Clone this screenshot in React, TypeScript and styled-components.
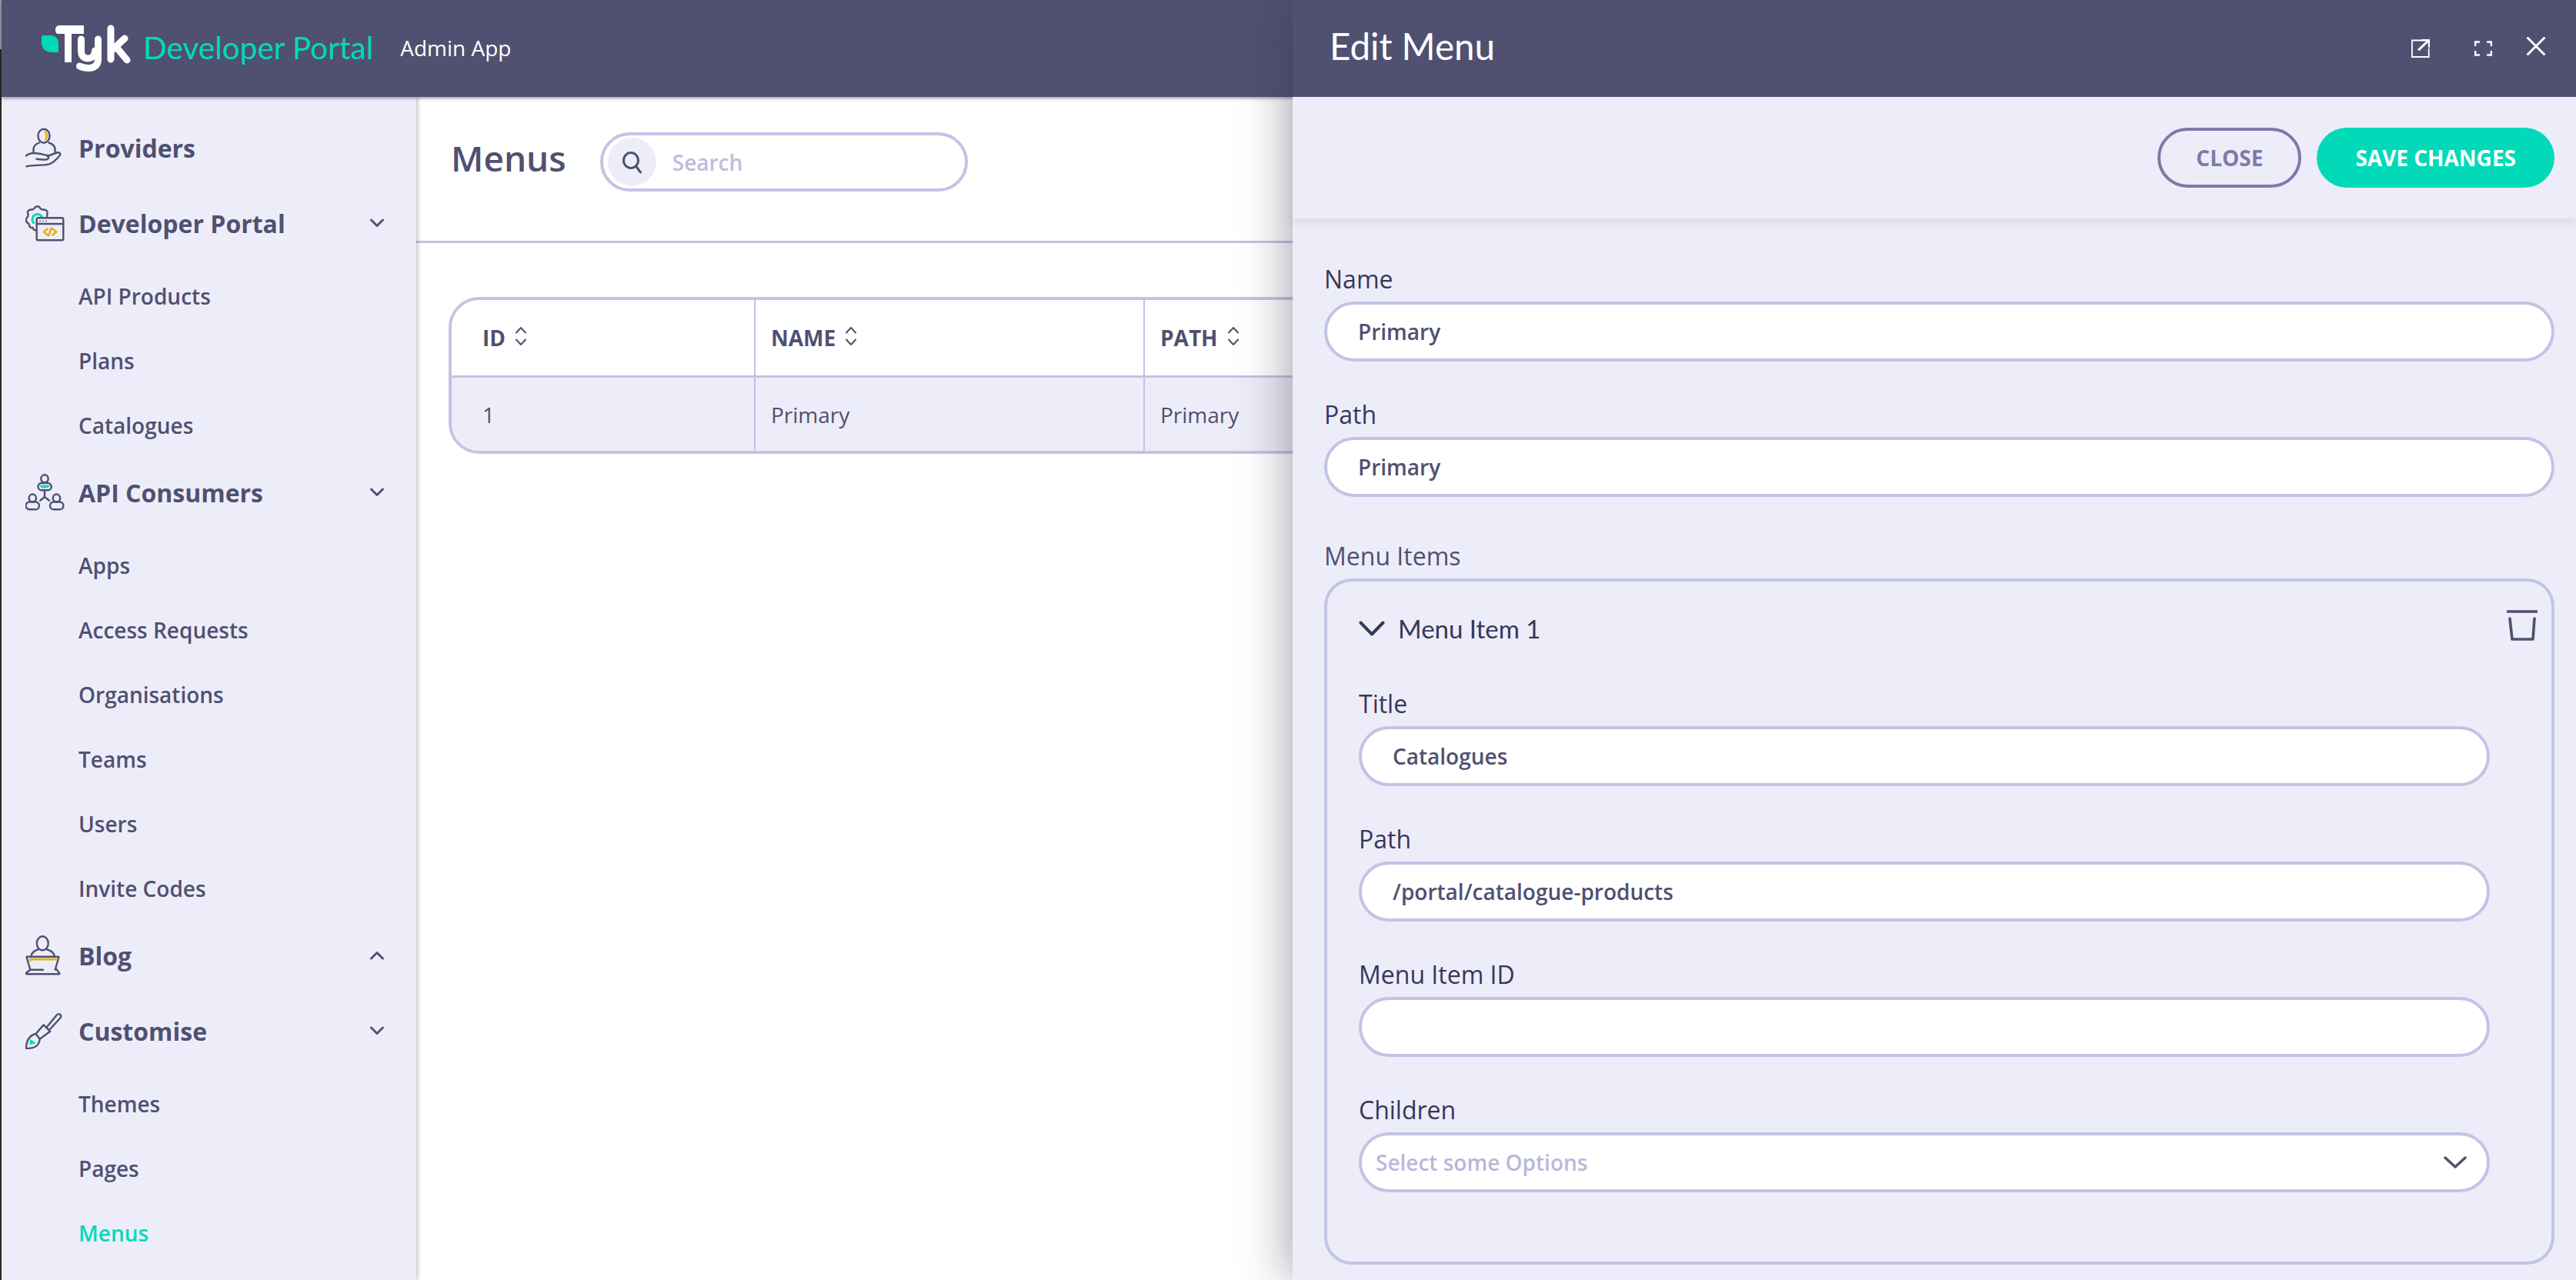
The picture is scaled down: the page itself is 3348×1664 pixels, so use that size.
import React from "react";
import styled, { createGlobalStyle } from "styled-components";

const DARK = "#505071";
const LIGHT = "#ededf9";
const LINE = "#c3c3e5";
const TEAL = "#00dab9";
const GOLD = "#e2b314";
const FONT = `"Open Sans", "Noto Sans", sans-serif`;

const Global = createGlobalStyle`
  html, body { margin: 0; padding: 0; height: 100%; overflow: hidden; background: #fff; }
  * { box-sizing: border-box; }
  body { font-family: ${FONT}; color: ${DARK}; }
`;

const Page = styled.div`
  position: relative;
  width: 3348px;
  height: 1664px;
  overflow: hidden;
  display: flex;
  background: #fff;
`;
const EdgeStrip = styled.div`
  width: 2px;
  flex: none;
  background: linear-gradient(#9d9da8 0 64px, #2a2622 64px);
`;
const Shell = styled.div`
  flex: 1;
  display: flex;
  flex-direction: column;
  min-width: 0;
`;
const TopBar = styled.header`
  height: 126px;
  flex: none;
  background: ${DARK};
  display: flex;
  align-items: center;
  padding-left: 52px;
  box-shadow: 0 2px 4px rgba(40, 40, 60, 0.45);
  position: relative;
  z-index: 3;
`;
const Logo = styled.svg`
  width: 120px;
  height: 64px;
  flex: none;
`;
const ProductName = styled.span`
  margin: 0 0 4px 12px;
  font-family: "Lato", sans-serif;
  font-weight: 400;
  font-size: 40.5px;
  color: ${TEAL};
  white-space: nowrap;
`;
const AdminLabel = styled.span`
  margin: 0 0 3px 35px;
  font-size: 28px;
  color: #fff;
  white-space: nowrap;
`;
const Body = styled.div`
  flex: 1;
  display: flex;
  min-height: 0;
`;
const Sidebar = styled.nav`
  width: 539px;
  flex: none;
  background: ${LIGHT};
  padding: 20px 0 0 31px;
  box-shadow: 2px 0 5px rgba(60, 60, 80, 0.3);
  position: relative;
  z-index: 2;
`;
const TopItem = styled.div`
  height: 92px;
  margin-bottom: 6px;
  display: flex;
  align-items: center;
  font-size: 32px;
  font-weight: 700;
  color: ${DARK};
`;
const NavIcon = styled.svg`
  width: 52px;
  height: 52px;
  flex: none;
  margin-right: 17px;
  fill: none;
  stroke: ${DARK};
  stroke-width: 2.4;
  stroke-linecap: round;
  stroke-linejoin: round;
`;
const NavCaret = styled.svg`
  width: 20px;
  height: 14px;
  margin-left: auto;
  margin-right: 41px;
  fill: none;
  stroke: ${DARK};
  stroke-width: 3;
  stroke-linecap: round;
  stroke-linejoin: round;
`;
const SubItem = styled.div<{ $active?: boolean }>`
  height: 84px;
  display: flex;
  align-items: center;
  padding: 2px 0 0 69px;
  font-size: 28px;
  font-weight: 600;
  color: ${(p) => (p.$active ? TEAL : DARK)};
`;
const Main = styled.main`
  flex: 1;
  min-width: 0;
  background: #fff;
`;
const MainHead = styled.div`
  height: 190px;
  border-bottom: 3px solid ${LINE};
  padding: 46px 0 0 45px;
  display: flex;
  align-items: flex-start;
`;
const Title = styled.h1`
  margin: 0;
  font-size: 46px;
  line-height: 66px;
  font-weight: 600;
  color: ${DARK};
`;
const SearchBox = styled.div`
  margin-left: 44px;
  width: 478px;
  height: 77px;
  border: 4px solid ${LINE};
  border-radius: 39px;
  display: flex;
  align-items: center;
  padding-left: 6px;
  background: #fff;
`;
const SearchBadge = styled.div`
  width: 63px;
  height: 63px;
  border-radius: 50%;
  background: ${LIGHT};
  display: flex;
  align-items: center;
  justify-content: center;
  flex: none;
`;
const SearchGlyph = styled.svg`
  width: 30px;
  height: 30px;
  fill: none;
  stroke: ${DARK};
  stroke-width: 3;
  stroke-linecap: round;
`;
const SearchField = styled.input`
  flex: 1;
  min-width: 0;
  margin-left: 19px;
  border: 0;
  outline: 0;
  background: transparent;
  font: 600 28px ${FONT};
  color: ${DARK};
  &::placeholder { color: #bdbcdd; opacity: 1; }
`;
const Table = styled.div`
  margin: 70px 30px 0 42px;
  border: 4px solid ${LINE};
  border-radius: 40px;
  overflow: hidden;
  display: grid;
  grid-template-columns: 395px 506px 1fr 1fr;
  grid-template-rows: 101px 95px;
`;
const HeadCell = styled.div<{ $first?: boolean }>`
  border-right: 2px solid ${LINE};
  border-bottom: 3px solid ${LINE};
  background: #fff;
  display: flex;
  align-items: center;
  padding-left: ${(p) => (p.$first ? 40 : 20)}px;
  gap: 11px;
  font-size: 28px;
  font-weight: 700;
  color: ${DARK};
`;
const RowCell = styled.div<{ $first?: boolean }>`
  border-right: 2px solid ${LINE};
  background: ${LIGHT};
  display: flex;
  align-items: center;
  padding-left: ${(p) => (p.$first ? 40 : 20)}px;
  font-size: 28px;
  color: ${DARK};
`;
const SortIcon = styled.svg`
  width: 18px;
  height: 26px;
  fill: none;
  stroke: ${DARK};
  stroke-width: 2;
  stroke-linecap: round;
  stroke-linejoin: round;
  margin-bottom: 4px;
`;
const Panel = styled.aside`
  position: absolute;
  top: 0;
  right: 0;
  bottom: 0;
  width: 1668px;
  background: ${LIGHT};
  box-shadow: -4px 0 60px rgba(50, 50, 70, 0.45);
  z-index: 5;
`;
const PanelTop = styled.div`
  height: 126px;
  background: ${DARK};
  display: flex;
  align-items: center;
  padding: 0 40px 0 48px;
`;
const PanelTitle = styled.h2`
  margin: 0 auto 8px 0;
  font-family: "Lato", sans-serif;
  font-weight: 400;
  font-size: 47.5px;
  color: #fff;
`;
const WindowIcon = styled.svg<{ $gap: number; $lift?: number }>`
  flex: none;
  margin-left: ${(p) => p.$gap}px;
  margin-top: ${(p) => p.$lift ?? 0}px;
  fill: none;
  stroke: #fff;
  stroke-linecap: round;
`;
const ActionBar = styled.div`
  height: 158px;
  display: flex;
  align-items: center;
  justify-content: flex-end;
  gap: 20px;
  padding-right: 28px;
  box-shadow: 0 6px 12px rgba(80, 80, 113, 0.12);
`;
const PillButton = styled.button<{ $primary?: boolean }>`
  height: 78px;
  border-radius: 39px;
  padding: 0 ${(p) => (p.$primary ? 50 : 46)}px;
  font: 700 28px ${FONT};
  cursor: pointer;
  color: ${(p) => (p.$primary ? "#fff" : "#7d7aa8")};
  background: ${(p) => (p.$primary ? TEAL : "transparent")};
  border: ${(p) => (p.$primary ? "0" : "4px solid #7d7aa8")};
`;
const PanelBody = styled.div`
  padding: 57px 28px 0 41px;
`;
const Field = styled.div`
  margin-bottom: 47px;
`;
const FieldLabel = styled.label<{ $soft?: boolean }>`
  display: block;
  height: 44px;
  line-height: 44px;
  margin-bottom: 7px;
  font-size: 32px;
  font-weight: 500;
  color: ${(p) => (p.$soft ? DARK : "#37375a")};
`;
const TextInput = styled.input`
  display: block;
  width: 100%;
  height: 78px;
  border: 4px solid ${LINE};
  border-radius: 39px;
  background: #fff;
  outline: 0;
  padding: 0 40px;
  font: 600 28px ${FONT};
  color: ${DARK};
`;
const SelectBox = styled.div`
  height: 78px;
  border: 4px solid ${LINE};
  border-radius: 39px;
  background: #fff;
  display: flex;
  align-items: center;
  justify-content: space-between;
  padding: 0 26px 0 18px;
  font-size: 28px;
  font-weight: 600;
  color: #b9b8d9;
`;
const SelectCaret = styled.svg`
  width: 30px;
  height: 16px;
  fill: none;
  stroke: ${DARK};
  stroke-width: 3.5;
  stroke-linecap: round;
  stroke-linejoin: round;
`;
const ItemsLabel = styled(FieldLabel)`
  margin-top: 55px;
`;
const ItemsBox = styled.div`
  height: 892px;
  border: 4px solid ${LINE};
  border-radius: 36px;
  padding: 0 80px 0 41px;
`;
const ItemHead = styled.div`
  height: 122px;
  margin: 0 -62px 15px 0;
  display: flex;
  align-items: center;
`;
const ItemCaret = styled.svg`
  width: 34px;
  height: 20px;
  flex: none;
  fill: none;
  stroke: #37375a;
  stroke-width: 4;
  stroke-linecap: round;
  stroke-linejoin: round;
`;
const ItemName = styled.span`
  margin-left: 17px;
  font-family: "Lato", sans-serif;
  font-size: 33px;
  color: #37375a;
`;
const TrashIcon = styled.svg`
  width: 40px;
  height: 40px;
  flex: none;
  margin: -8px 0 0 auto;
  fill: none;
  stroke: ${DARK};
  stroke-width: 3.6;
  stroke-linecap: round;
  stroke-linejoin: round;
`;

const Caret = ({ up }: { up?: boolean }) => (
  <NavCaret viewBox="0 0 20 14">
    <path d={up ? "M2.5 11 10 3.5 17.5 11" : "M2.5 3 10 10.5 17.5 3"} />
  </NavCaret>
);

const Sort = () => (
  <SortIcon viewBox="0 0 18 26">
    <path d="M3 8.5 9 2l6 6.5M3 17.5 9 24l6-6.5" />
  </SortIcon>
);

const ProvidersIcon = () => (
  <NavIcon viewBox="0 0 52 52">
    <ellipse cx="24" cy="10.7" rx="7.5" ry="9" />
    <path d="M25 4c5 2 5 11 0 13.5 2-4 2-9.500 0-13.500z" fill={GOLD} stroke={GOLD} strokeWidth="1" />
    <path d="M10.500 32v-4c0-5 3.500-7 7.500-8.500M30.500 19.500c4.500 1.500 8 3.500 8 8.500v5" />
    <path d="M.5 36.500C4 34 8 33 11 33c6 0 12 2 17.500 3 2.500 1 2 5-1 5.300-4 .4-9 0-13-.6" />
    <path d="M28.500 37 41 32.500c3-1 5.500 1.500 3.500 4-3 3.500-8 9-13.500 10.800-8 2-20 1.200-29.500 3" />
  </NavIcon>
);

const DevIcon = () => (
  <NavIcon viewBox="0 0 52 52">
    <path d="M14 35c-2 1-4-1-4.500-3-2.500.5-4.500-1-4.500-3.500 0-1.500-1.500-2.500-3.500-4-1-1.500-1-3.500.5-5.500 1.500-1.500 2-4 1-6-.5-3 2-4.500 5-4.500 2 0 4-1.500 5-3.500 1.500-1 3.500-1 5 0 1 2 3 3.500 5 3.500 3.500 0 6 1.500 5.500 4.500l-.5 5" />
    <path d="M10.500 25.500A6.600 6.600 0 1 1 21 17" stroke={TEAL} strokeWidth="3" />
    <rect x="14.700" y="19.300" width="34.600" height="29" rx="2" fill={LIGHT} />
    <path d="M14.700 27h34.600" />
    <path d="M19 23.300h.1M23 23.300h.1M27 23.300h.1" strokeWidth="1.800" />
    <path d="M28.700 33.500 24 37.500l4.700 4M35.500 33.500l4.700 4-4.700 4M33.700 32.700 30.300 42" stroke={GOLD} strokeWidth="2.600" />
  </NavIcon>
);

const ConsumersIcon = () => (
  <NavIcon viewBox="0 0 52 52">
    <ellipse cx="25" cy="8.300" rx="4.700" ry="5" />
    <rect x="16.500" y="14" width="17.300" height="9.300" rx="4.600" />
    <path d="M19.500 17.500c2 3 9 3 11.500 0z" fill={TEAL} stroke={TEAL} strokeWidth="1.500" />
    <path d="M25 23.300V32M25 32l-5.800 4.700M25 32l6 4.700" />
    <ellipse cx="9.300" cy="33.500" rx="4.700" ry="5" />
    <rect x=".6" y="38.500" width="17.400" height="9.800" rx="4.900" />
    <ellipse cx="40.500" cy="33.500" rx="4.700" ry="5" />
    <rect x="32" y="38.500" width="17.400" height="9.800" rx="4.900" />
  </NavIcon>
);

const BlogIcon = () => (
  <NavIcon viewBox="0 0 52 52">
    <ellipse cx="22.300" cy="10.300" rx="7.500" ry="9" />
    <path d="M7.700 27c0-5 5-7.500 9.300-9M27.700 18c4.300 1.500 10 4 10 9" />
    <path d="M6.300 44.500 1.600 28.500c-.2-.5.2-.8.700-.8h40.400c.5 0 .9.300.7.800L38.700 44.500" />
    <path d="M4.500 29.700H41l-.5 2.800H8.500L5.800 34.800z" fill={GOLD} stroke="none" />
    <path d="M6.300 44.700H23M6 45l-5 3.700c-.8.700-.4 1.500.6 1.500h41.800c1 0 1.400-.8.600-1.500L39.500 43" />
  </NavIcon>
);

const BrushIcon = () => (
  <NavIcon viewBox="0 0 52 52">
    <path d="M28 21 40.500 5.800c1.500-1.800 3.800-1.900 5-.7s1 3.200-.5 4.700L31.500 24.500" />
    <path d="m23.700 18.300 8.500 8.500-13.500 10-5-6.900z" />
    <path d="M13.700 30C6 31.500 1.500 38 .8 48.800c9 .7 17-2.500 17.900-12" />
    <path d="m6.300 36.700 7.400 5.600-8.400 2z" fill={TEAL} stroke="none" />
  </NavIcon>
);

const menuItems = ["Title", "Path", "Menu Item ID"];
const values: Record<string, string> = {
  Title: "Catalogues",
  Path: "/portal/catalogue-products",
  "Menu Item ID": "",
};

export default function App() {
  return (
    <Page>
      <Global />
      <EdgeStrip />
      <Shell>
        <TopBar>
          <Logo viewBox="54 30 120 64">
            <path d="M54 47c0-1.100.9-2 2-2h11c5 0 9 5 9 11v11H67c-7 0-13-5-13-12z" fill={TEAL} />
            <path d="M72 37.500c0-3 2-5.500 5-5.500h32v11H93v37H84V43h-9c-2 0-3-2.500-3-5.500z" fill="#fff" />
            <path d="M105.500 50v15c0 6 3 10 8.500 10s9.500-4 9.500-10M127.500 50v26c0 8-5 11.500-12 11.500-5 0-9-1-12-2.500" fill="none" stroke="#fff" strokeWidth="9" strokeLinecap="round" />
            <path d="M144 36v40M147 63l15-14M151 60l14 17" fill="none" stroke="#fff" strokeWidth="9" strokeLinecap="round" strokeLinejoin="round" />
          </Logo>
          <ProductName>Developer Portal</ProductName>
          <AdminLabel>Admin App</AdminLabel>
        </TopBar>
        <Body>
          <Sidebar>
            <TopItem><ProvidersIcon />Providers</TopItem>
            <TopItem><DevIcon />Developer Portal<Caret /></TopItem>
            <SubItem>API Products</SubItem>
            <SubItem>Plans</SubItem>
            <SubItem>Catalogues</SubItem>
            <TopItem><ConsumersIcon />API Consumers<Caret /></TopItem>
            <SubItem>Apps</SubItem>
            <SubItem>Access Requests</SubItem>
            <SubItem>Organisations</SubItem>
            <SubItem>Teams</SubItem>
            <SubItem>Users</SubItem>
            <SubItem>Invite Codes</SubItem>
            <TopItem><BlogIcon />Blog<Caret up /></TopItem>
            <TopItem><BrushIcon />Customise<Caret /></TopItem>
            <SubItem>Themes</SubItem>
            <SubItem>Pages</SubItem>
            <SubItem $active>Menus</SubItem>
          </Sidebar>
          <Main>
            <MainHead>
              <Title>Menus</Title>
              <SearchBox>
                <SearchBadge>
                  <SearchGlyph viewBox="0 0 30 30">
                    <ellipse cx="14" cy="12.500" rx="9.500" ry="10" />
                    <path d="m20.500 20 6 8" />
                  </SearchGlyph>
                </SearchBadge>
                <SearchField placeholder="Search" readOnly />
              </SearchBox>
            </MainHead>
            <Table>
              <HeadCell $first>ID<Sort /></HeadCell>
              <HeadCell>NAME<Sort /></HeadCell>
              <HeadCell>PATH<Sort /></HeadCell>
              <HeadCell />
              <RowCell $first>1</RowCell>
              <RowCell>Primary</RowCell>
              <RowCell>Primary</RowCell>
              <RowCell />
            </Table>
          </Main>
        </Body>
      </Shell>
      <Panel>
        <PanelTop>
          <PanelTitle>Edit Menu</PanelTitle>
          <WindowIcon $gap={0} width="24" height="24" viewBox="0 0 24 24">
            <path d="M15 1.500H.9V23h21.800V11.700" strokeWidth="1.800" strokeLinecap="butt" />
            <path d="M10 13.300 23 1M14.500 1h8.800v8.500" strokeWidth="3" />
          </WindowIcon>
          <WindowIcon $gap={58} width="23" height="20" viewBox="0 0 23 20">
            <path d="M1.200 6V1.500H6M17 1.500h4.800V6M1.200 14v4.500H6M17 18.500h4.800V14" strokeWidth="2.400" />
          </WindowIcon>
          <WindowIcon $gap={45} $lift={-6} width="24" height="24" viewBox="0 0 24 24">
            <path d="m1.500 1.500 21 21M22.500 1.500l-21 21" strokeWidth="3" />
          </WindowIcon>
        </PanelTop>
        <ActionBar>
          <PillButton>CLOSE</PillButton>
          <PillButton $primary>SAVE CHANGES</PillButton>
        </ActionBar>
        <PanelBody>
          <Field>
            <FieldLabel>Name</FieldLabel>
            <TextInput defaultValue="Primary" readOnly />
          </Field>
          <Field>
            <FieldLabel>Path</FieldLabel>
            <TextInput defaultValue="Primary" readOnly />
          </Field>
          <Field>
            <ItemsLabel $soft>Menu Items</ItemsLabel>
            <ItemsBox>
              <ItemHead>
                <ItemCaret viewBox="0 0 34 20"><path d="M2.500 2.500 17 17.500 31.500 2.500" /></ItemCaret>
                <ItemName>Menu Item 1</ItemName>
                <TrashIcon viewBox="0 0 40 40">
                  <path d="M1 2h38M4 11l3 27h27l2-27" />
                </TrashIcon>
              </ItemHead>
              {menuItems.map((name) => (
                <Field key={name}>
                  <FieldLabel>{name}</FieldLabel>
                  <TextInput defaultValue={values[name]} readOnly />
                </Field>
              ))}
              <Field>
                <FieldLabel>Children</FieldLabel>
                <SelectBox>
                  Select some Options
                  <SelectCaret viewBox="0 0 30 16"><path d="M2 2 15 14 28 2" /></SelectCaret>
                </SelectBox>
              </Field>
            </ItemsBox>
          </Field>
        </PanelBody>
      </Panel>
    </Page>
  );
}
